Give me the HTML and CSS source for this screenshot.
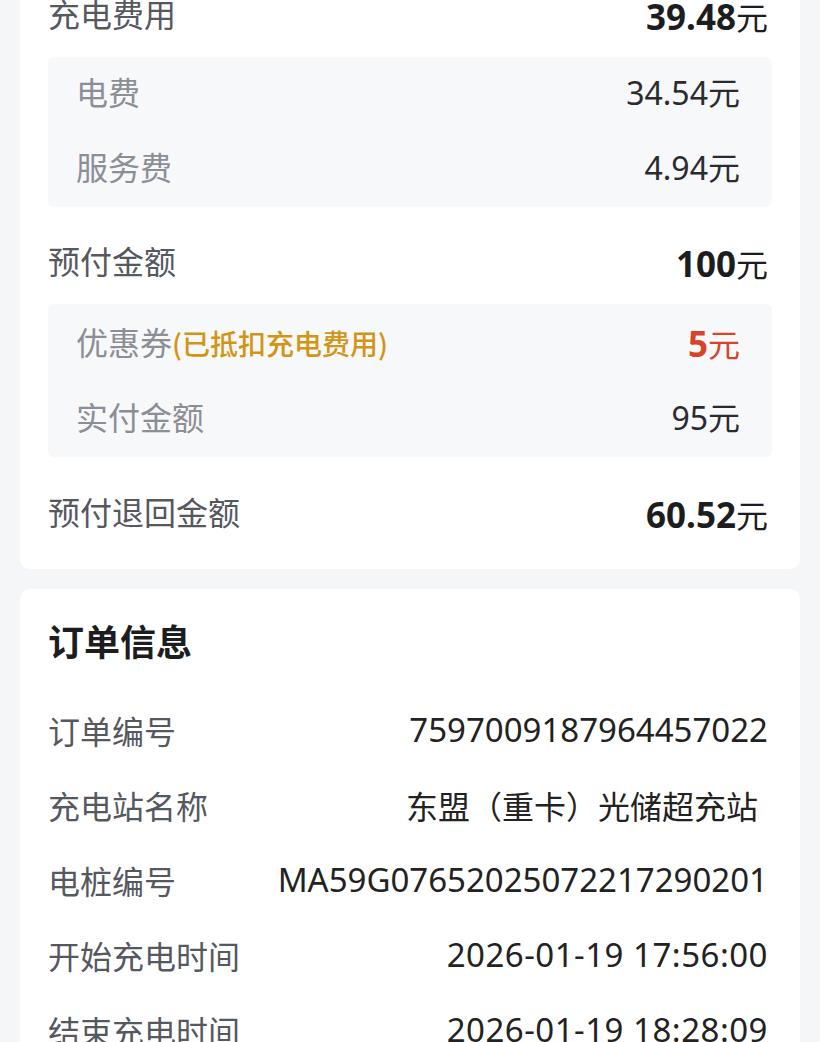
FILE: index.html
```html
<!DOCTYPE html>
<html lang="zh-CN">
<head>
<meta charset="utf-8">
<title>订单详情</title>
<link rel="stylesheet" href="styles.css">
</head>
<body>
<div class="page">
  <section class="card card-fee">
    <div class="row main">
      <span class="label">充电费用</span>
      <span class="amount">39.48<span class="unit">元</span></span>
    </div>
    <div class="subbox">
      <div class="row sub">
        <span class="sublabel">电费</span>
        <span class="subvalue">34.54<span class="unit">元</span></span>
      </div>
      <div class="row sub">
        <span class="sublabel">服务费</span>
        <span class="subvalue">4.94<span class="unit">元</span></span>
      </div>
    </div>
    <div class="row main spaced">
      <span class="label">预付金额</span>
      <span class="amount">100<span class="unit">元</span></span>
    </div>
    <div class="subbox coupon">
      <div class="row sub">
        <span class="sublabel">优惠券<span class="note">(已抵扣充电费用)</span></span>
        <span class="subvalue discount">5<span class="unit">元</span></span>
      </div>
      <div class="row sub">
        <span class="sublabel">实付金额</span>
        <span class="subvalue">95<span class="unit">元</span></span>
      </div>
    </div>
    <div class="row main spaced last">
      <span class="label">预付退回金额</span>
      <span class="amount">60.52<span class="unit">元</span></span>
    </div>
  </section>

  <section class="card card-order">
    <h2 class="title">订单信息</h2>
    <div class="row info">
      <span class="label">订单编号</span>
      <span class="value">7597009187964457022</span>
    </div>
    <div class="row info">
      <span class="label">充电站名称</span>
      <span class="value station">东盟（重卡）光储超充站</span>
    </div>
    <div class="row info">
      <span class="label">电桩编号</span>
      <span class="value">MA59G07652025072217290201</span>
    </div>
    <div class="row info">
      <span class="label">开始充电时间</span>
      <span class="value time">2026-01-19 17:56:00</span>
    </div>
    <div class="row info">
      <span class="label">结束充电时间</span>
      <span class="value time">2026-01-19 18:28:09</span>
    </div>
  </section>
</div>
</body>
</html>
```
FILE: styles.css
```css
* { box-sizing: border-box; }
html, body {
  margin: 0;
  padding: 0;
  background: #f5f6f8;
}
body {
  font-family: "Noto Sans", "Noto Sans CJK SC", sans-serif;
  font-size: 32px;
  color: #222222;
  overflow: hidden;
}
.page {
  padding: 0 20px;
  margin-top: -26px;
}
.card {
  background: #ffffff;
  border-radius: 10px;
  padding: 0 28px;
}
.card-fee {
  padding-bottom: 14px;
}
.card-order {
  margin-top: 20px;
  padding-top: 16px;
}
.row {
  display: flex;
  justify-content: space-between;
  align-items: center;
  white-space: nowrap;
}
.row.main {
  height: 83px;
  padding-bottom: 6px;
  padding-right: 4px;
}
.row.main.spaced {
  margin-top: 14px;
}
.row.main.last {
  margin-top: 15px;
}
.label {
  font-family: "Noto Sans CJK SC", sans-serif;
  color: #55585f;
}
.amount {
  font-weight: 700;
  font-size: 35px;
  color: #1c1d20;
  padding-top: 8px;
}
.unit {
  font-family: "Noto Sans CJK SC", sans-serif;
  font-weight: 400;
  font-size: 32px;
}
.subbox {
  background: #f7f8fa;
  border-radius: 6px;
  padding: 0 32px 0 28px;
}
.subbox.coupon {
  padding-top: 3px;
}
.row.sub {
  height: 75px;
  padding-bottom: 8px;
}
.sublabel {
  font-family: "Noto Sans CJK SC", sans-serif;
  font-size: 32px;
  color: #8b8e96;
}
.note {
  font-family: "Noto Sans CJK SC", sans-serif;
  font-size: 28px;
  color: #d29515;
  font-weight: 500;
}
.subvalue {
  color: #2a2b2e;
}
.subvalue.discount {
  color: #d8432a;
  font-size: 35px;
  font-weight: 700;
  padding-top: 6px;
}
.subvalue.discount .unit {
  font-weight: 400;
}
.title {
  margin: 0 0 20px;
  height: 70px;
  line-height: 70px;
  font-family: "Noto Sans CJK SC", sans-serif;
  font-size: 36px;
  font-weight: 700;
  color: #1c1d20;
}
.row.info {
  height: 75px;
  padding-bottom: 6px;
  padding-right: 4px;
}
.value {
  font-size: 33px;
  color: #222222;
}
.value.station {
  font-family: "Noto Sans CJK SC", sans-serif;
  font-size: 32px;
  padding-right: 10px;
}
.value.time {
  letter-spacing: 0.5px;
}
```
